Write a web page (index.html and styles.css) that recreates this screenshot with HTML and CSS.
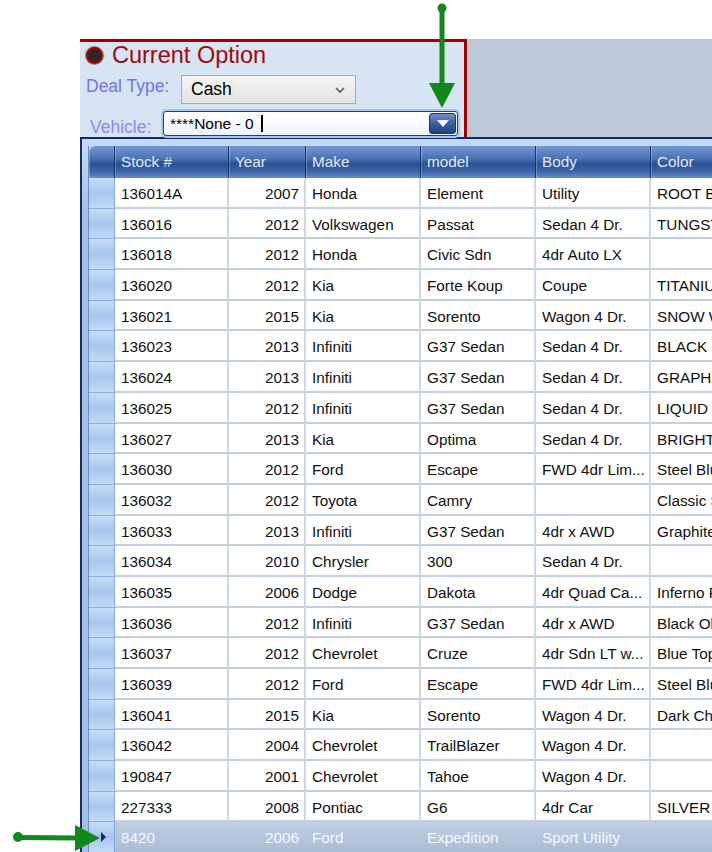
FILE: index.html
```html
<!DOCTYPE html>
<html lang="en">
<head>
    <meta charset="UTF-8">
    <title>Current Option - Vehicle Lookup</title>
    <link rel="stylesheet" href="styles.css">
</head>
<body>

    <div class="top">
        <!-- Deal panel -->
        <div class="panel">
            <div class="title-row">
                <span class="radio"></span>
                <span class="title">Current Option</span>
            </div>
            <div class="field-row">
                <label class="deal-label">Deal Type:</label>
                <div class="select">
                    <span>Cash</span>
                    <svg width="10" height="6" viewBox="0 0 10 6"><path d="M1 1 L5 5 L9 1" fill="none" stroke="#555" stroke-width="1.6"/></svg>
                </div>
            </div>
            <div class="field-row vehicle-row">
                <label class="vehicle-label">Vehicle:</label>
                <div class="combo">
                    <span class="combo-text">****None - 0</span>
                    <span class="caret"></span>
                    <span class="combo-btn">
                        <svg width="14" height="9" viewBox="0 0 14 9"><path d="M1 1 H13 L7 8 Z" fill="#fff"/></svg>
                    </span>
                </div>
            </div>
        </div>
        <div class="filler"></div>
    </div>

    <!-- Vehicle dropdown grid -->
    <div class="popup">
        <div class="grid" id="grid">
            <div class="row head">
                <div class="rh"></div>
                <div>Stock #</div>
                <div>Year</div>
                <div>Make</div>
                <div>model</div>
                <div>Body</div>
                <div>Color</div>
            </div>
        </div>
    </div>

    <!-- callout arrows -->
    <svg class="arrow arrow-down" width="32" height="112" viewBox="0 0 32 112">
        <circle cx="17" cy="8" r="4.5" fill="#11881a"/>
        <line x1="17" y1="8" x2="17" y2="88" stroke="#11881a" stroke-width="5"/>
        <polygon points="4,83 30,83 17,108" fill="#11881a"/>
    </svg>
    <svg class="arrow arrow-right" width="96" height="32" viewBox="0 0 96 32">
        <circle cx="10" cy="15" r="5" fill="#11881a"/>
        <line x1="10" y1="15.5" x2="70" y2="16" stroke="#11881a" stroke-width="5"/>
        <polygon points="67,3 67,29 92,16" fill="#11881a"/>
    </svg>

    <script src="script.js"></script>
</body>
</html>
```

FILE: styles.css
```css
html, body {
    overflow: hidden;
}

body {
    margin: 0;
    padding-top: 39px;
    height: 852px;
    box-sizing: border-box;
    background-color: #fff;
    font-family: 'Liberation Sans', Arial, sans-serif;
    position: relative;
}

.top {
    display: flex;
    margin-left: 80px;
    height: 98px;
}

.panel {
    width: 387px;
    box-sizing: border-box;
    background-color: #d7e4f3;
    border-top: 3px solid #a20000;
    border-right: 3px solid #a20000;
    padding-left: 6px;
}

.filler {
    flex: 1;
    background-color: #bcc8d8;
}

.title-row {
    display: flex;
    align-items: center;
    height: 26px;
}

.radio {
    width: 13px;
    height: 13px;
    border-radius: 50%;
    background-color: #2a2a2a;
    border: 2px solid #a80000;
    box-shadow: 0 0 0 1px #8a8a8a;
}

.title {
    margin-left: 9px;
    font-size: 23.5px;
    color: #a00a0a;
}

.field-row {
    display: flex;
    margin-top: 7px;
    height: 29px;
}

.deal-label {
    width: 95px;
    font-size: 17.5px;
    line-height: 22px;
    color: #7474ee;
}

.select {
    width: 175px;
    box-sizing: border-box;
    border: 1px solid #acacac;
    background: linear-gradient(#f4f4f4, #e4e4e4);
    display: flex;
    align-items: center;
    justify-content: space-between;
    padding: 0 10px 0 9px;
    font-size: 17.5px;
    color: #000;
}

.vehicle-row {
    height: 25px;
}

.vehicle-label {
    width: 73px;
    margin-left: 4px;
    margin-top: 5px;
    font-size: 17.5px;
    line-height: 22px;
    color: #8a8aec;
}

.combo {
    width: 295px;
    box-sizing: border-box;
    border: 1px solid #2f3f5e;
    border-radius: 3px;
    box-shadow: 0 0 0 2px #a9c8ef;
    background: linear-gradient(#ffffff, #edf1f8);
    display: flex;
    align-items: center;
    padding-left: 6px;
    font-size: 15.5px;
    color: #000;
}

.caret {
    width: 2px;
    height: 17px;
    margin-left: 7px;
    background-color: #000;
}

.combo-btn {
    margin-left: auto;
    margin-right: 1px;
    width: 27px;
    height: 21px;
    box-sizing: border-box;
    border: 1px solid #1b356f;
    border-radius: 3px;
    background: linear-gradient(#7193d0, #3a5ea2 50%, #1f4387);
    display: flex;
    align-items: center;
    justify-content: center;
}

/* dropdown grid */
.popup {
    margin-left: 80px;
    border-top: 2px solid #0c2a66;
    border-left: 2px solid #1a2c60;
    background: linear-gradient(#c4daf8, #a2bee6 80px);
    padding: 7px 0 0 6px;
    height: 800px;
}

.grid {
    border-left: 1px solid #6a8cc8;
    font-size: 15.3px;
}

.row {
    display: grid;
    grid-template-columns: 26px 114px 77px 115px 115px 115px 115px;
    height: 30.7px;
    background-color: #fff;
    color: #111;
}

.row > div {
    box-sizing: border-box;
    line-height: 25.7px;
    padding: 3px 6px 0;
    border-bottom: 2px solid #c3cfe0;
    border-right: 2px solid #d0dae7;
    white-space: nowrap;
    overflow: hidden;
}

.row > .num {
    text-align: right;
    padding-right: 5px;
}

.row > .rh {
    padding: 0;
    background: linear-gradient(#c6ddf8, #a9c6ee 50%, #c2daf7);
    border-right: 1px solid #86a8dc;
    border-bottom: 1px solid #8cafe0;
}

.row.head {
    height: 32px;
    background: transparent;
}

.row.head > div {
    line-height: 32px;
    padding-top: 0;
    border: none;
    border-right: 1px solid #15326a;
    box-shadow: inset 1px 0 0 rgba(255, 255, 255, 0.25);
    background: linear-gradient(#7598d2, #4b71b4 40%, #2a5294 55%, #3c64a8 80%, #6a8fcb);
    color: #e2eafb;
}

.row.head > .rh {
    border-top-left-radius: 6px;
}

.row.selected {
    background: linear-gradient(#c0cee1, #aabdd6);
    color: #f6f8ff;
}

.row.selected > div {
    border-color: transparent;
}

.row.selected > .rh {
    position: relative;
    border-right: 1px solid #86a8dc;
    border-bottom: 1px solid #8cafe0;
}

.row.selected > .rh::after {
    content: '';
    position: absolute;
    left: 12px;
    top: 10px;
    border-left: 5px solid #14285e;
    border-top: 5px solid transparent;
    border-bottom: 5px solid transparent;
}

.arrow {
    position: absolute;
}

.arrow-down {
    left: 425px;
    top: 0;
}

.arrow-right {
    left: 8px;
    top: 822px;
}
```

FILE: script.js
```js
// stock list shown in the vehicle dropdown (long text is cut like the grid does)
const vehicles = [
    ['136014A', 2007, 'Honda', 'Element', 'Utility', 'ROOT BEER METALLIC'],
    ['136016', 2012, 'Volkswagen', 'Passat', 'Sedan 4 Dr.', 'TUNGSTEN SILVER'],
    ['136018', 2012, 'Honda', 'Civic Sdn', '4dr Auto LX', ''],
    ['136020', 2012, 'Kia', 'Forte Koup', 'Coupe', 'TITANIUM'],
    ['136021', 2015, 'Kia', 'Sorento', 'Wagon 4 Dr.', 'SNOW WHITE PEARL'],
    ['136023', 2013, 'Infiniti', 'G37 Sedan', 'Sedan 4 Dr.', 'BLACK OBSIDIAN'],
    ['136024', 2013, 'Infiniti', 'G37 Sedan', 'Sedan 4 Dr.', 'GRAPHITE SHADOW'],
    ['136025', 2012, 'Infiniti', 'G37 Sedan', 'Sedan 4 Dr.', 'LIQUID PLATINUM'],
    ['136027', 2013, 'Kia', 'Optima', 'Sedan 4 Dr.', 'BRIGHT SILVER'],
    ['136030', 2012, 'Ford', 'Escape', 'FWD 4dr Lim...', 'Steel Blue'],
    ['136032', 2012, 'Toyota', 'Camry', '', 'Classic Silver'],
    ['136033', 2013, 'Infiniti', 'G37 Sedan', '4dr x AWD', 'Graphite Shadow'],
    ['136034', 2010, 'Chrysler', '300', 'Sedan 4 Dr.', ''],
    ['136035', 2006, 'Dodge', 'Dakota', '4dr Quad Ca...', 'Inferno Red'],
    ['136036', 2012, 'Infiniti', 'G37 Sedan', '4dr x AWD', 'Black Obsidian'],
    ['136037', 2012, 'Chevrolet', 'Cruze', '4dr Sdn LT w...', 'Blue Topaz'],
    ['136039', 2012, 'Ford', 'Escape', 'FWD 4dr Lim...', 'Steel Blue'],
    ['136041', 2015, 'Kia', 'Sorento', 'Wagon 4 Dr.', 'Dark Cherry'],
    ['136042', 2004, 'Chevrolet', 'TrailBlazer', 'Wagon 4 Dr.', ''],
    ['190847', 2001, 'Chevrolet', 'Tahoe', 'Wagon 4 Dr.', ''],
    ['227333', 2008, 'Pontiac', 'G6', '4dr Car', 'SILVER'],
    ['8420', 2006, 'Ford', 'Expedition', 'Sport Utility', '']
];

const grid = document.getElementById('grid');

vehicles.forEach((v, i) => {
    const row = document.createElement('div');
    row.className = 'row';
    if (i === vehicles.length - 1) row.classList.add('selected');

    const rh = document.createElement('div');
    rh.className = 'rh';
    row.appendChild(rh);

    v.forEach((val, j) => {
        const cell = document.createElement('div');
        if (j === 1) cell.className = 'num';
        cell.textContent = val;
        row.appendChild(cell);
    });

    grid.appendChild(row);
});
```
